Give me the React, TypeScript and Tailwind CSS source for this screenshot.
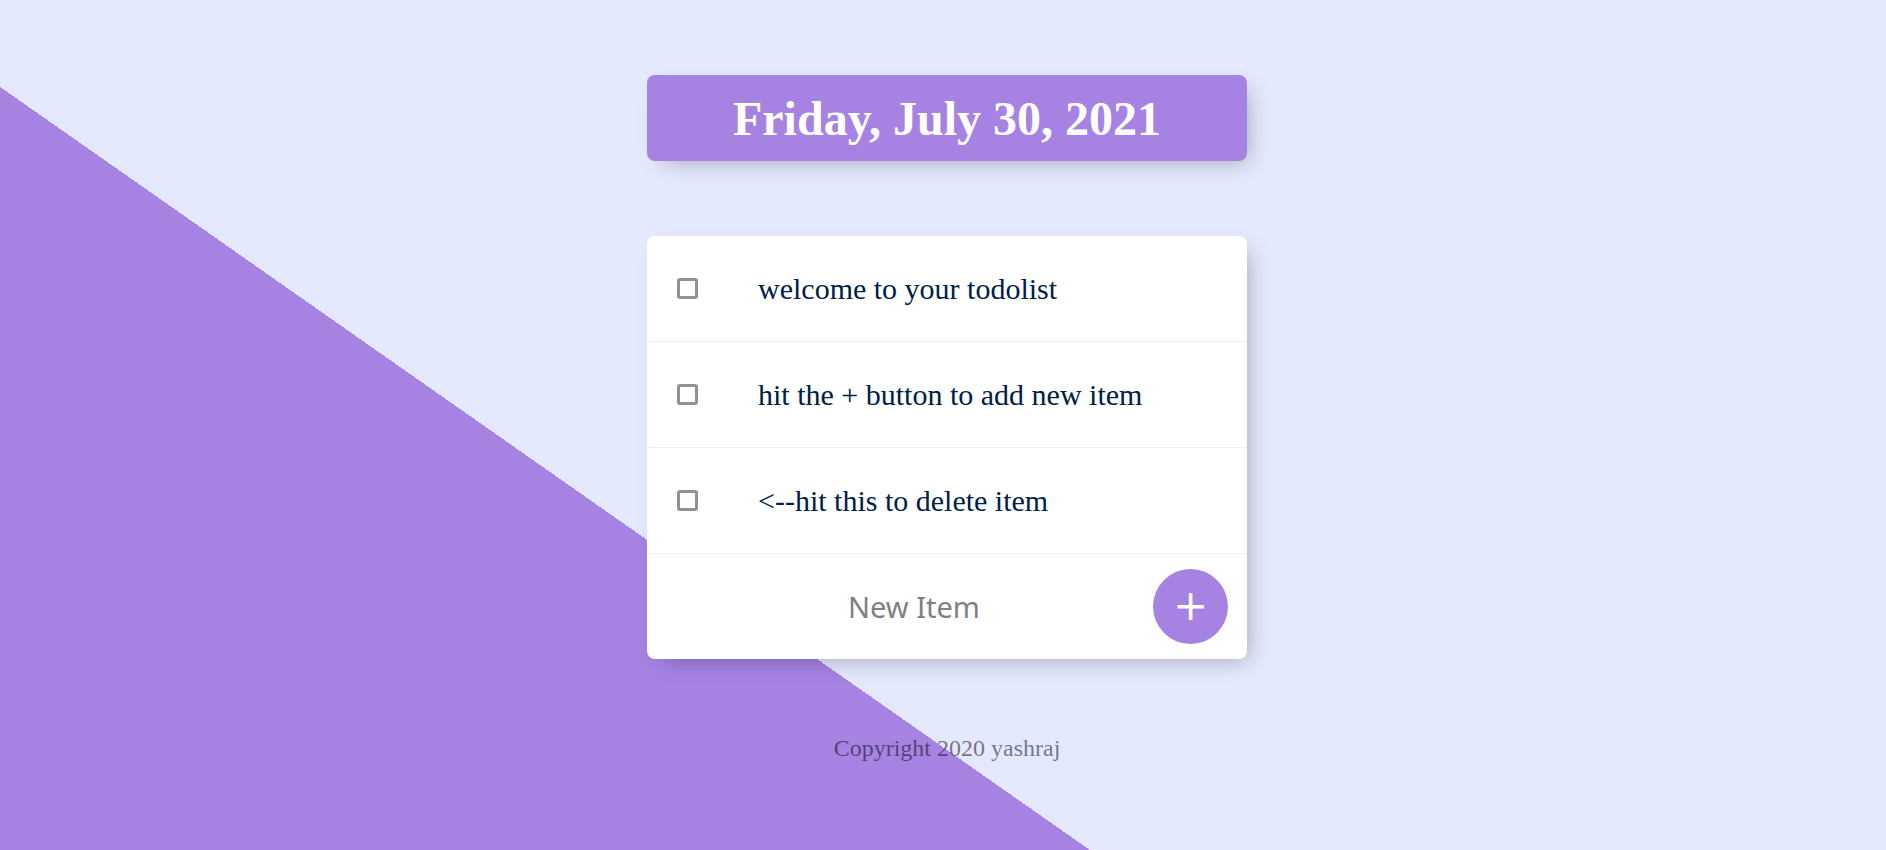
import { useState } from "react";
import type { FormEvent } from "react";

const initialItems = [
  "welcome to your todolist",
  "hit the + button to add new item",
  "<--hit this to delete item",
];

const panelShadow = "shadow-[8px_8px_22px_-8px_rgba(0,0,0,0.3)]";

function TodoItem({ id, text, onDelete }: { id: string; text: string; onDelete: () => void }) {
  return (
    <li className="flex min-h-[106px] items-center border-b border-[#f1f1f1]">
      <input
        id={id}
        type="checkbox"
        checked={false}
        onChange={onDelete}
        className="mx-[30px] size-[21px] shrink-0 appearance-none rounded-[3px] border-3 border-[#8f8f9d] bg-white"
      />
      <label htmlFor={id} className="px-[30px] text-[30px] leading-9 text-[#00204a]">
        {text}
      </label>
    </li>
  );
}

export default function App() {
  const [items, setItems] = useState(initialItems);
  const [draft, setDraft] = useState("");

  function addItem(event: FormEvent) {
    event.preventDefault();
    if (!draft.trim()) return;
    setItems([...items, draft]);
    setDraft("");
  }

  return (
    <div className="flex min-h-screen flex-col items-center bg-[#e4e9fd] bg-[linear-gradient(35deg,#a683e3_50%,#e4e9fd_50%)] bg-[length:calc(100%+8px)_1500px] bg-no-repeat pt-[75px] pl-2 font-['Liberation_Serif',serif]">
      <header className={`w-full max-w-[600px] rounded-lg bg-[#a683e3] px-4 pt-[17px] pb-[15px] text-center ${panelShadow}`}>
        <h1 className="text-[48px] leading-[54px] font-bold text-white">Friday, July 30, 2021</h1>
      </header>

      <main className={`mt-[75px] w-full max-w-[600px] rounded-lg bg-white ${panelShadow}`}>
        <ul>
          {items.map((text, index) => (
            <TodoItem
              key={index}
              id={`item-${index}`}
              text={text}
              onDelete={() => setItems(items.filter((_, i) => i !== index))}
            />
          ))}
        </ul>
        <form onSubmit={addItem} className="flex min-h-[105px] items-center pr-[19px] pl-7">
          <input
            type="text"
            aria-label="New Item"
            placeholder="New Item"
            autoComplete="off"
            value={draft}
            onChange={(event) => setDraft(event.target.value)}
            className="h-[90px] min-w-0 flex-1 bg-transparent text-center font-['Noto_Sans',sans-serif] text-[29px] text-[#00204a] outline-none placeholder:text-[#808080]"
          />
          <button
            type="submit"
            aria-label="Add item"
            className="flex size-[75px] shrink-0 items-center justify-center rounded-full bg-[#a683e3] pb-px font-['DejaVu_Sans',sans-serif] text-[42px] leading-none text-white"
          >
            +
          </button>
        </form>
      </main>

      <footer className="py-[75px] text-center text-2xl leading-7 text-black/50">Copyright 2020 yashraj</footer>
    </div>
  );
}
